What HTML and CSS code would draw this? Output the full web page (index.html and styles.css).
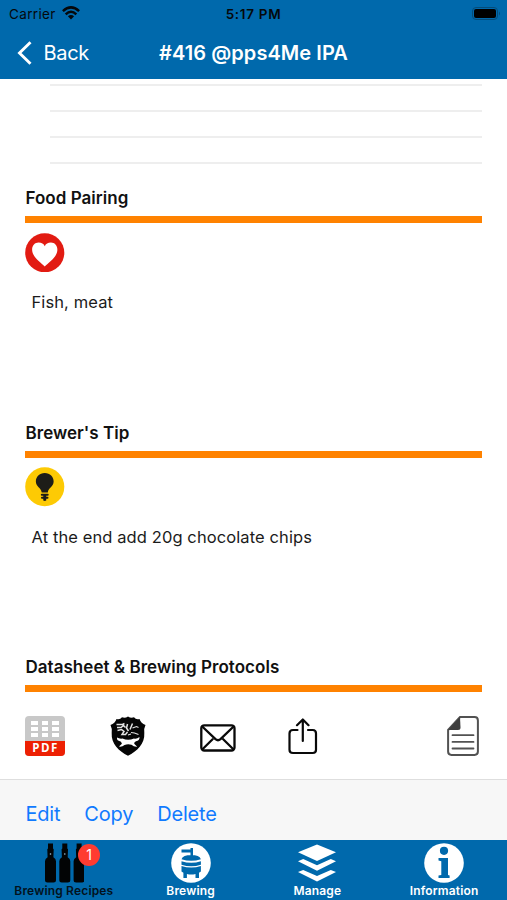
FILE: index.html
```html
<!DOCTYPE html>
<html lang="en">
<head>
<meta charset="utf-8">
<title>#416 @pps4Me IPA</title>
<link rel="stylesheet" href="styles.css">
</head>
<body>
<header class="header">
  <div class="status">
    <div class="carrier"><span>Carrier</span>
      <svg width="18" height="14" viewBox="0 0 18 14"><g fill="none" stroke="#05080b" stroke-width="2.5"><path d="M.9 5.2Q9-2.4 17.1 5.2"/><path d="M3.7 8.3Q9 3.3 14.3 8.3"/></g><path d="M5.9 10.3Q9 7.7 12.1 10.3L9 13.5Z" fill="#05080b"/></svg>
    </div>
    <span class="time">5:17 PM</span>
    <svg class="battery" width="29" height="13" viewBox="0 0 29 13"><rect x=".5" y=".5" width="25" height="12" rx="3.5" fill="none" stroke="#054c79"/><rect x="2" y="2" width="22" height="9" rx="2" fill="#000"/><path d="M27 4.5q2 2 0 4z" fill="#054c79"/></svg>
  </div>
  <div class="nav">
    <a class="back"><svg width="16" height="26" viewBox="0 0 16 26"><path d="M13.5 2.3 2.5 13l11 10.7" fill="none" stroke="#fff" stroke-width="2.9"/></svg><span>Back</span></a>
    <h1>#416 @pps4Me IPA</h1>
  </div>
</header>
<main>
  <div class="lines"><i></i><i></i><i></i><i></i></div>
  <section>
    <h2>Food Pairing</h2>
    <svg class="icon" viewBox="0 0 40 40"><circle cx="20" cy="20" r="19.8" fill="#e21b12"/><path d="M20 34C16 30 7.200 24 7.200 17C7.200 12.500 10.200 9.700 13.700 9.700C16.800 9.700 19 11.200 20 13.300C21 11.200 23.200 9.700 26.300 9.700C29.800 9.700 32.800 12.500 32.800 17C32.800 24 24 30 20 34Z" fill="#fff"/></svg>
    <p>Fish, meat</p>
  </section>
  <section>
    <h2>Brewer's Tip</h2>
    <svg class="icon" viewBox="0 0 40 40"><circle cx="20" cy="20" r="19.8" fill="#fdca04"/><path d="M20 6c-5.400 0-9 3.800-9 8.700 0 5.300 5.500 6.400 5.900 11h6.200c.4-4.600 5.900-5.700 5.900-11C29 9.800 25.400 6 20 6Z" fill="#1d1d18"/><path d="M17 28h6M17.200 31.200h5.600" stroke="#1d1d18" stroke-width="2" stroke-linecap="round"/><path d="M18.500 28h3v6q-1.500 1-3 0Z" fill="#1d1d18"/></svg>
    <p>At the end add 20g chocolate chips</p>
  </section>
  <section class="last">
    <h2>Datasheet &amp; Brewing Protocols</h2>
    <div class="actions">
      <div class="pdf"><div class="sheet"><i></i><i></i><i></i><i></i><i></i><i></i><i></i><i></i><i></i></div><b>PDF</b></div>
      <svg class="shield" width="36" height="40" viewBox="0 0 36 40"><path d="M.5 9Q5 7.500 6.500 3Q10 4 12 1.200Q15 2.500 18 .4Q21 2.500 24 1.200Q26 4 29.500 3Q31 7.500 35.500 9Q33.500 13 34.300 17C35 28 27 35 18 39.800C9 35 1 28 1.700 17Q2.500 13 .5 9Z" fill="#050505"/><path d="M7 21.500q2.500 1.500 5.500 1 5.500 2.500 11.500 0 2.600.8 5.500-1.500.2 3.800-3.500 4.200-2 .5-1.800 2.600l3 2.900q-3.400.3-5.700-1.900-3.500-1.300-7 .2-2.300 2.100-5.500 1.600l2.900-2.900q-.5-2.400-2.600-2.700-2.600-.5-2.300-3.500Z" fill="#fff"/><g fill="none" stroke="#e4e4e4" stroke-width="1.500"><path d="M6.500 8.500h6l2-1M7 11.500h4l2.500-2 2 2M7.500 14.500l4-1 2.500 2-2 3h3.500l2-2.500M17.500 8l-1 4 2 3M22.500 7.500l-2.500 6"/><path d="M22.500 12l4-1.500 2 1M21 16.500l3.500.5 4 1.500M18 19l3-1" stroke-width="1.100"/></g></svg>
      <svg class="mail" width="36" height="28" viewBox="0 0 36 28"><g fill="none" stroke="#090909" stroke-width="2.300" stroke-linejoin="round"><rect x="1.300" y="1.300" width="33.200" height="25.200" rx="3"/><path d="M2.200 2.500 15.500 15.200q2.500 2 5 0L33.600 2.500M2.200 25.500 13.100 14.800M33.600 25.500 22.700 14.800"/></g></svg>
      <svg class="share" width="30" height="37" viewBox="0 0 30 37"><g fill="none" stroke="#090909" stroke-width="2.200" stroke-linecap="round" stroke-linejoin="round"><path d="M9.500 12H5q-3.500 0-3.500 3.500v16.200q0 3.300 3.500 3.300h19.700q3.300 0 3.300-3.300V15.500q0-3.500-3.300-3.500H20M14.800 23V1.800M9 7.200l5.800-5.700 5.700 5.700"/></g></svg>
      <svg class="doc" width="32" height="40" viewBox="0 0 32 40"><path d="M13 1.100h14.500q3.400 0 3.400 3.400v31q0 3.400-3.400 3.400H4.500q-3.400 0-3.400-3.400V14Z" fill="#fff" stroke="#525252" stroke-width="2"/><path d="M13 1 1 14h10q2.500 0 2.500-2.500Z" fill="#3f3f3f"/><path d="M5.500 19.200h21M5.500 25.900h21M5.500 32.500h21" stroke="#525252" stroke-width="1.800" stroke-linecap="round"/></svg>
    </div>
  </section>
</main>
<div class="toolbar"><a>Edit</a><a>Copy</a><a>Delete</a></div>
<nav class="tabs">
  <a class="active"><svg viewBox="0 0 40 40"><defs><path id="bottle" d="M3 .5h5v5l.7.8-.3 8q2.600 1.600 2.600 4V37q0 2.500-2.500 2.500H2.500Q0 39.500 0 37V18.300q0-2.400 2.600-4l-.3-8L3 5.500Z"/></defs><g fill="#020405"><use href="#bottle" x="1"/><use href="#bottle" x="15.300"/><use href="#bottle" x="29.600"/></g><g fill="#a5cbe4"><circle cx="6.500" cy="11" r=".8"/><circle cx="20.800" cy="11" r=".8"/><circle cx="35.100" cy="11" r=".8"/></g></svg><span>Brewing Recipes</span><em>1</em></a>
  <a><svg viewBox="0 0 40 40"><circle cx="20" cy="20" r="19.800" fill="#fff"/><g fill="#0069ac"><path d="M10.500 6.500h9V5H22v8h-2.500V9.500h-9ZM10.500 16.200Q12 12 20.200 12t9.700 4.200q-9.700 3-19.400 0ZM10.500 18.200q9.700 3.200 19.400 0v3.600q-9.700 3-19.400 0ZM10.500 23q9.700 3 19.400 0v5.500l-1.900 1.200V35h-3.500v-4q-4.300 1-8.600 0v4h-3.500v-5.300l-1.900-1.200Z"/></g></svg><span>Brewing</span></a>
  <a><svg viewBox="0 0 40 40"><g fill="#fff"><path d="M20 1.500 39 9.300 20 18 1 9.300Z"/><path id="layer" d="m1 18.200 5.200-2.200L20 22.200 33.800 16l5.200 2.200-19 9.500Z"/><use href="#layer" y="10.900"/></g></svg><span>Manage</span></a>
  <a><svg viewBox="0 0 40 40"><circle cx="20" cy="20" r="19.800" fill="#fff"/><g fill="#0069ac"><circle cx="20" cy="7.800" r="4.100"/><path d="M14.500 15H24v17l1.600.5V35H14.500v-2.500l2.800-.5V18.200l-2.800-.7Z"/></g></svg><span>Information</span></a>
</nav>
</body>
</html>
```
FILE: styles.css
```css
* { box-sizing: border-box; }
body { margin: 0; width: 507px; height: 900px; overflow: hidden; display: flex; flex-direction: column; background: #fff; color: #111; font-family: Inter, "Liberation Sans", sans-serif; }
svg { display: block; flex: none; }
h1, h2, p { margin: 0; white-space: nowrap; }
.header { height: 79px; flex: none; background: #0069ac; }
.status { height: 27px; display: grid; grid-template-columns: 1fr auto 1fr; align-items: center; font-size: 13.5px; color: #05080b; }
.carrier { display: flex; align-items: center; gap: 6px; padding-left: 9px; letter-spacing: .35px; }
.carrier svg { margin-top: -1px; }
.time { font-weight: 600; font-size: 13.5px; letter-spacing: .7px; }
.battery { justify-self: end; margin-right: 6px; }
.nav { height: 51px; display: grid; grid-template-columns: 1fr auto 1fr; align-items: center; color: #fff; }
.back { display: flex; align-items: center; gap: 11px; padding-left: 16.5px; font-size: 20px; letter-spacing: -.3px; }
h1 { font-size: 20px; font-weight: 600; letter-spacing: .06px; }
main { height: 700px; flex: none; }
.lines { height: 108px; padding: 5px 25px 0 50px; display: flex; flex-direction: column; gap: 24px; }
.lines i { height: 2px; background: #eee; }
section { height: 234.5px; padding: 0 25px; }
h2 { height: 36px; line-height: 22px; font-size: 17px; font-weight: 600; letter-spacing: .03px; text-indent: .5px; border-bottom: 7px solid #ff8200; }
.icon { width: 39.5px; height: 39.5px; margin-top: 9.5px; }
p { margin: 19px 0 0 6.5px; line-height: 22px; font-size: 16.5px; letter-spacing: .1px; color: #1b1b1b; }
.actions { display: flex; align-items: center; height: 40px; margin-top: 24px; }
.pdf { width: 40px; height: 40px; border-radius: 4px; overflow: hidden; background: #c8c8c8; }
.sheet { height: 25px; padding: 5px 6px 4px; display: grid; grid-template-columns: repeat(3, 1fr); grid-template-rows: repeat(3, 1fr); gap: 2px 4px; }
.sheet i { background: #fff; }
.pdf b { display: block; height: 15px; background: #ed2003; color: #fff; text-align: center; font: 700 11.5px/14px "Open Sans", sans-serif; letter-spacing: 1.5px; padding-left: 1px; }
.shield { margin-left: 45px; }
.mail { margin: 3px 0 0 54px; }
.share { margin-left: 51.5px; }
.doc { margin-left: auto; margin-right: 3px; }
.toolbar { height: 61px; flex: none; background: #f7f7f7; border-top: 1px solid #dedede; display: flex; align-items: center; padding: 8px 25.5px 0; gap: 24px; font-size: 20px; letter-spacing: -.2px; color: #107aff; }
.tabs { height: 60px; flex: none; background: #0069ac; color: #fff; display: grid; grid-template-columns: repeat(4, 1fr); }
.tabs a { position: relative; display: flex; flex-direction: column; align-items: center; padding: 3px 0 0 1px; }
.tabs svg { width: 40px; height: 40px; }
.tabs span { font-size: 12px; line-height: 16px; font-weight: 600; letter-spacing: .17px; white-space: nowrap; }
.tabs .active { color: #03121d; }
.tabs em { position: absolute; left: 78px; top: 4px; width: 22px; height: 22px; border-radius: 50%; background: #ff3b30; color: #fff; text-align: center; font-size: 14px; line-height: 22px; font-style: normal; }
```
